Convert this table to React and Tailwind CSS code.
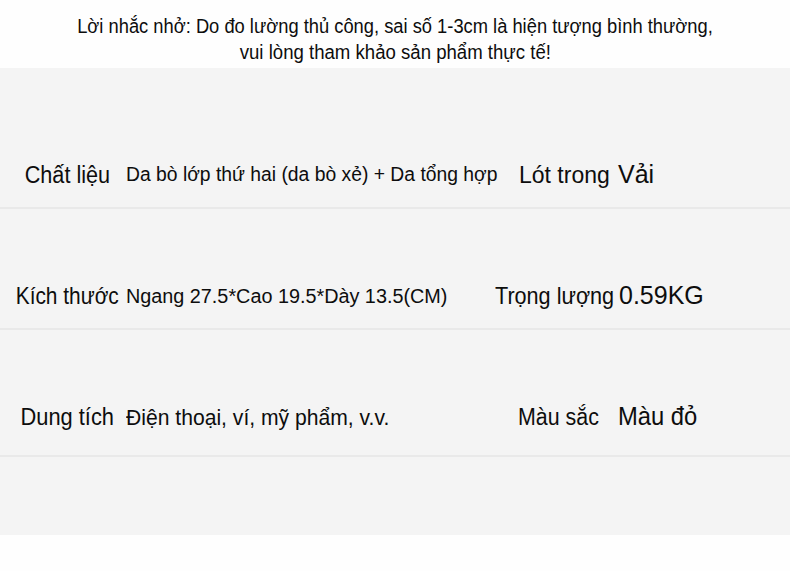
import React from "react";

const font = "font-['Liberation_Sans',Arial,sans-serif] text-[#0d0d0d] whitespace-nowrap";

function Row({ rowClass, label, labelClass, value, valueClass, label2, label2Class, value2, value2Class }) {
  return (
    <div className={`grid grid-cols-[8px_118px_1fr] items-center ${rowClass}`}>
      <div />
      <div className="flex justify-center">
        <span className={`${font} ${labelClass}`}>{label}</span>
      </div>
      <div className="relative flex items-center">
        <span className={`${font} origin-left ${valueClass}`}>{value}</span>
        <span className={`absolute ${font} origin-left ${label2Class}`}>{label2}</span>
        <span className={`absolute ${font} origin-left ${value2Class}`}>{value2}</span>
      </div>
    </div>
  );
}

export default function App() {
  return (
    <div className="w-[790px] h-[571px] bg-[#fefefe] overflow-hidden">
      <div className={`h-[68px] flex flex-col items-center pt-[13px] text-[20px] leading-[26px] ${font}`}>
        <div className="scale-x-[0.916]">Lời nhắc nhở: Do đo lường thủ công, sai số 1-3cm là hiện tượng bình thường,</div>
        <div className="scale-x-[0.93]">vui lòng tham khảo sản phẩm thực tế!</div>
      </div>
      <div className="bg-[#f4f4f4] h-[467px] flex flex-col">
        <Row
          rowClass="h-[141px] pt-[75px] border-b-2 border-[#e9e9e9]"
          label="Chất liệu"
          labelClass="text-[23px] scale-x-[0.94]"
          value="Da bò lớp thứ hai (da bò xẻ) + Da tổng hợp"
          valueClass="text-[19.5px] scale-x-[0.99]"
          label2="Lót trong"
          label2Class="left-[393px] text-[23px]"
          value2="Vải"
          value2Class="left-[492px] text-[25px]"
        />
        <Row
          rowClass="h-[121px] pt-[55px] border-b-2 border-[#e9e9e9]"
          label="Kích thước"
          labelClass="text-[24px] scale-x-[0.87]"
          value="Ngang 27.5*Cao 19.5*Dày 13.5(CM)"
          valueClass="text-[20px] scale-x-[0.99]"
          label2="Trọng lượng"
          label2Class="left-[369px] text-[24px] scale-x-[0.9]"
          value2="0.59KG"
          value2Class="left-[493px] text-[25px]"
        />
        <Row
          rowClass="h-[127px] pt-[49px] border-b-2 border-[#e9e9e9]"
          label="Dung tích"
          labelClass="text-[23px] scale-x-[0.95]"
          value="Điện thoại, ví, mỹ phẩm, v.v."
          valueClass="text-[22px] scale-x-[0.96]"
          label2="Màu sắc"
          label2Class="left-[392px] text-[23px] scale-x-[0.93]"
          value2="Màu đỏ"
          value2Class="left-[492px] text-[25px] scale-x-[0.95]"
        />
        <div className="flex-1" />
      </div>
    </div>
  );
}
